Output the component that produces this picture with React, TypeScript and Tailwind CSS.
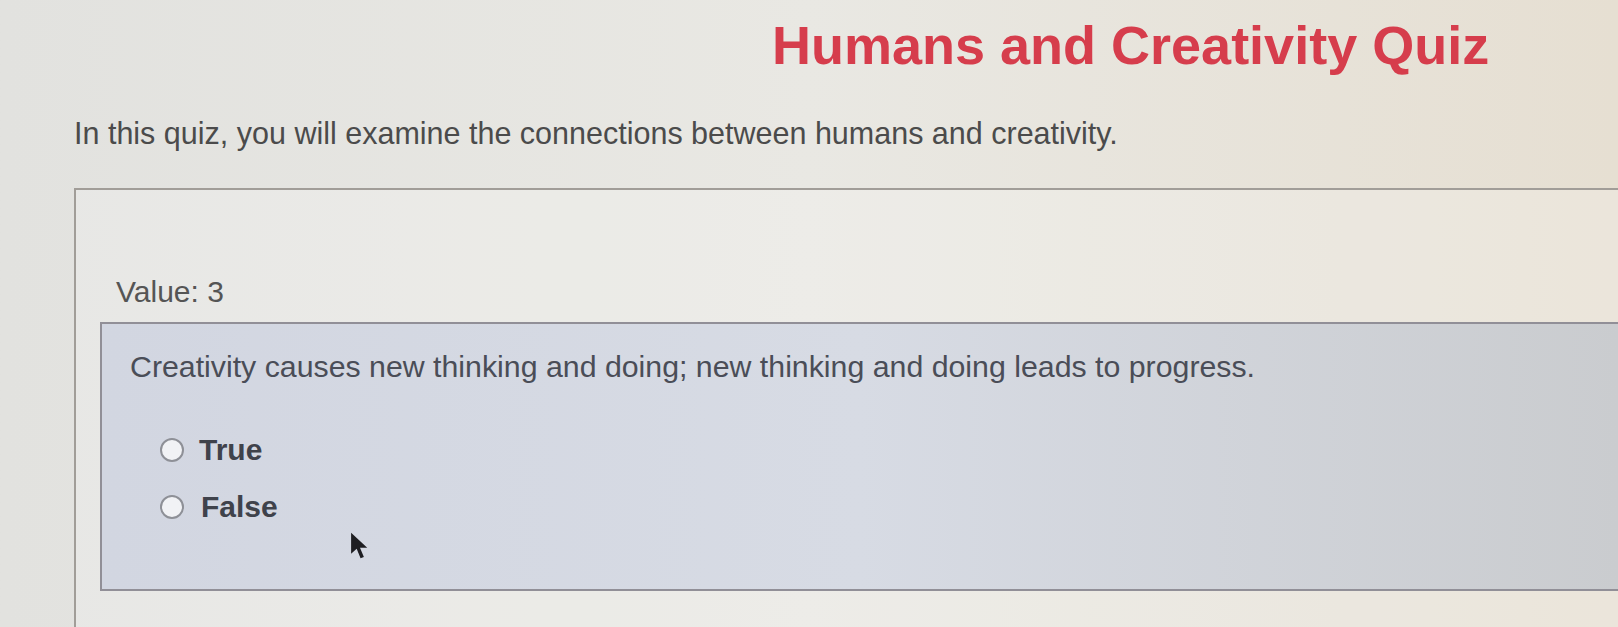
import React from "react";

function Radio() {
  return (
    <span className="inline-block h-[24px] w-[24px] shrink-0 rounded-full border-2 border-[#8e9097] bg-[#f1f2f5]" />
  );
}

export default function App() {
  return (
    <div className="relative h-[627px] w-[1618px] overflow-hidden bg-linear-to-r from-[#e2e2df] via-[#e9e8e3] to-[#e6dfd2] font-['Liberation_Sans',Arial,sans-serif]">
      <h1 className="pl-[772px] pt-[15px] text-[54px] font-bold leading-[60px] text-[#d63d4c]">
        Humans and Creativity Quiz
      </h1>
      <p className="mt-[40px] pl-[74px] text-[30.5px] leading-[36px] text-[#4b4b4b]">
        In this quiz, you will examine the connections between humans and creativity.
      </p>

      <div className="ml-[74px] mt-[37px] border-l-2 border-t-2 border-[#a19d98] bg-white/20 pb-[60px] pl-[24px] pt-[84px]">
        <div className="pl-[16px] text-[30px] leading-[36px] text-[#555555]">Value: 3</div>

        <div className="mt-[12px] border-y-2 border-l-2 border-[#918f97] bg-linear-to-r from-[#d2d6e1] via-[#d7dbe4] to-[#cacccf] pb-[64px] pl-[28px] pt-[25px]">
          <p className="text-[30.3px] leading-[36px] text-[#4a4d57]">
            Creativity causes new thinking and doing; new thinking and doing leads to progress.
          </p>
          <div className="mt-[47px] flex flex-col gap-[21px] pl-[30px]">
            <label className="flex items-center gap-[15px] text-[30px] font-bold leading-[36px] text-[#3f424b]">
              <Radio />
              <span>True</span>
            </label>
            <label className="flex items-center gap-[17px] text-[30px] font-bold leading-[36px] text-[#3f424b]">
              <Radio />
              <span>False</span>
            </label>
          </div>
        </div>
      </div>

      <svg
        className="absolute left-[350px] top-[531px]"
        width="20"
        height="30"
        viewBox="0 0 18 26"
      >
        <path d="M1 1 L1 20 L6 15.5 L9.5 24 L12.5 22.8 L9 14.5 L15.5 14.5 Z" fill="#1e1e22" />
      </svg>
    </div>
  );
}
